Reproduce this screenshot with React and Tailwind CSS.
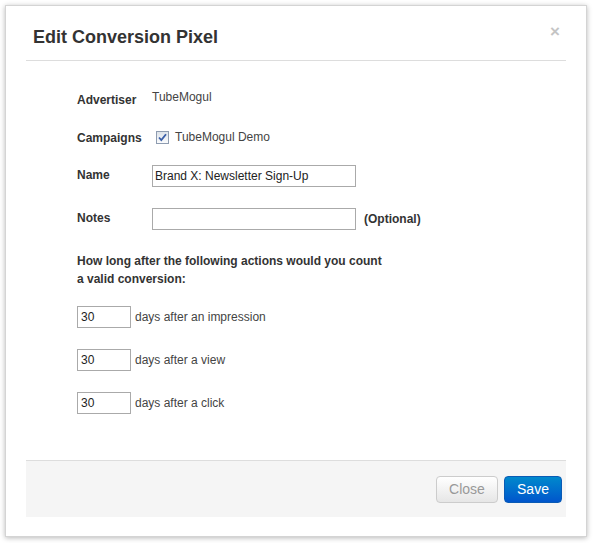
import React from 'react';

const font = { fontFamily: '"Liberation Sans", Arial, sans-serif' };

function Row({ label, children, className = '', labelPad = 'pt-0' }) {
  return (
    <div className={`flex items-center h-[22px] ${className}`}>
      <div className={`w-[75px] shrink-0 text-[12px] font-bold text-[#333] ${labelPad}`}>{label}</div>
      {children}
    </div>
  );
}

function Checkbox() {
  return (
    <span className="w-[13px] h-[13px] border border-[#8e9cb0] bg-gradient-to-b from-[#dde3ea] to-[#fafbfc] flex items-center justify-center">
      <svg width="9" height="9" viewBox="0 0 9 9">
        <path d="M1 4.5 L3.3 7 L8 1.2" fill="none" stroke="#3a5fa8" strokeWidth="1.8" />
      </svg>
    </span>
  );
}

function DayRow({ text, className = '' }) {
  return (
    <div className={`flex items-center h-[22px] ${className}`}>
      <input
        defaultValue="30"
        className="w-[54px] h-[22px] border border-[#aaa] px-[3px] text-[12px] text-[#222] outline-none"
      />
      <span className="ml-[4px] text-[12px] text-[#444]">{text}</span>
    </div>
  );
}

export default function App() {
  return (
    <div className="w-[593px] h-[543px] bg-white p-[5px]" style={font}>
      <div className="w-[582px] h-[532px] bg-white border border-[#d4d4d4] shadow-[0_1px_5px_rgba(0,0,0,0.28)] flex flex-col">
        {/* Header */}
        <div className="mx-[20px] h-[55px] border-b border-[#ddd] flex items-start justify-between">
          <h3 className="pl-[7px] pt-[20px] text-[18px] leading-[22px] font-bold text-[#333]">
            Edit Conversion Pixel
          </h3>
          <span className="pt-[16px] pr-[6px] text-[17px] leading-[20px] font-bold text-[#c4c4c4]">×</span>
        </div>

        {/* Body */}
        <div className="mx-[20px] flex-1 pl-[51px] pt-[26px]">
          <Row label="Advertiser" labelPad="pt-[3px]">
            <span className="text-[12px] text-[#444] -mt-[2px]">TubeMogul</span>
          </Row>
          <Row label="Campaigns" className="mt-[17px]" labelPad="pt-[1px]">
            <div className="flex items-center gap-[6px] pl-[4px]">
              <Checkbox />
              <span className="text-[12px] text-[#444]">TubeMogul Demo</span>
            </div>
          </Row>
          <Row label="Name" className="mt-[17px]" labelPad="-mt-[2px]">
            <input
              defaultValue="Brand X: Newsletter Sign-Up"
              className="w-[204px] h-[22px] border border-[#aaa] px-[2px] text-[12px] text-[#222] outline-none"
            />
          </Row>
          <Row label="Notes" className="mt-[21px]" labelPad="-mt-[2px]">
            <input className="w-[204px] h-[22px] border border-[#aaa] px-[2px] text-[12px] outline-none" />
            <span className="ml-[8px] text-[12px] font-bold text-[#333]">(Optional)</span>
          </Row>
          <p className="mt-[22px] text-[12px] leading-[18px] font-bold text-[#333]">
            How long after the following actions would you count
            <br />
            a valid conversion:
          </p>
          <DayRow text="days after an impression" className="mt-[18px]" />
          <DayRow text="days after a view" className="mt-[21px]" />
          <DayRow text="days after a click" className="mt-[21px]" />
        </div>

        {/* Footer */}
        <div className="mx-[20px] mb-[19px] h-[57px] bg-[#f5f5f5] border-t border-[#ddd] flex items-center justify-end gap-[6px] pr-[4px]">
          <button className="w-[62px] h-[27px] rounded-[4px] border border-[#ccc] bg-gradient-to-b from-white to-[#e6e6e6] text-[14px] text-[#999] shadow-[inset_0_1px_0_rgba(255,255,255,0.2)]">
            Close
          </button>
          <button className="w-[58px] h-[27px] rounded-[4px] border border-[#0a5bb5] bg-gradient-to-b from-[#0088cc] to-[#0055cc] text-[14px] text-white">
            Save
          </button>
        </div>
      </div>
    </div>
  );
}
